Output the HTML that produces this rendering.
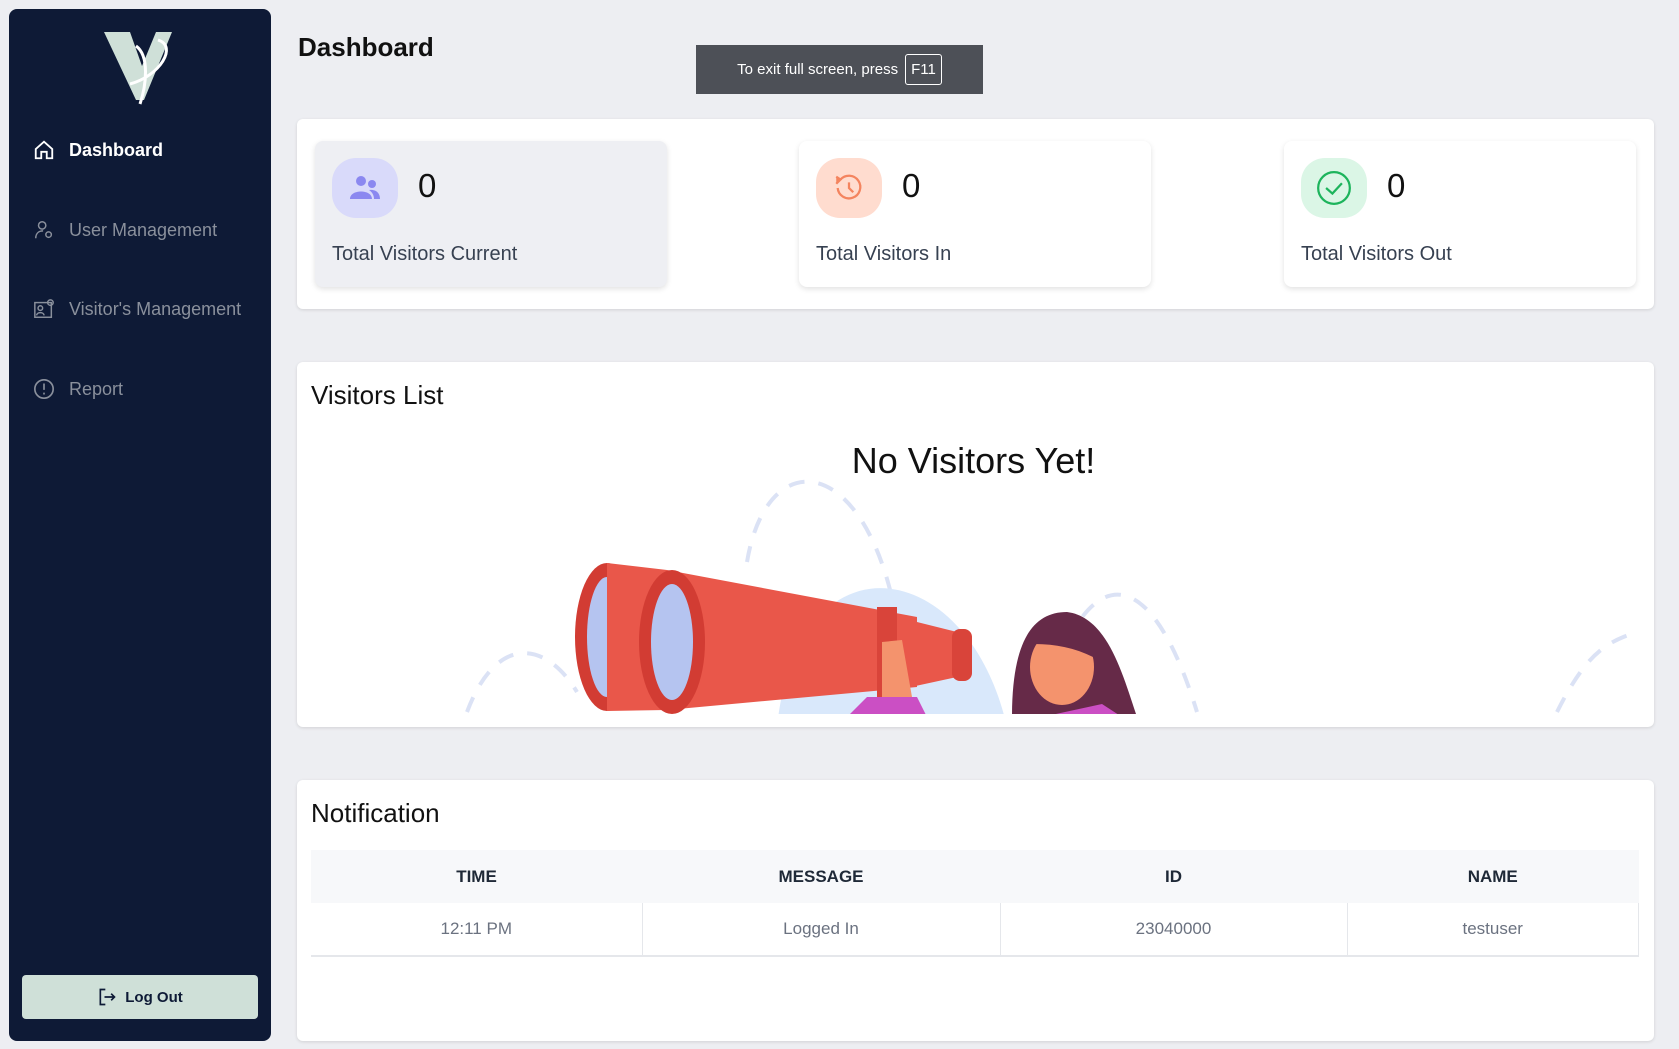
<!DOCTYPE html>
<html><head><meta charset="utf-8"><style>
*{box-sizing:border-box;margin:0;padding:0}
body{width:1679px;height:1049px;background:#edeef2;font-family:"Liberation Sans",sans-serif;position:relative;overflow:hidden;color:#111}
.a{position:absolute}
.side{left:9px;top:9px;width:262px;height:1032px;background:#0e1a36;border-radius:8px}
.nav{left:33px;font-size:18px;color:#8a909c;display:flex;align-items:center;gap:14px}
.nav svg{width:22px;height:22px}
.card{background:#fff;border-radius:6px;box-shadow:0 1px 3px rgba(0,0,0,.12)}
.st{width:352px;height:146px;border-radius:8px;background:#fff;box-shadow:0 2px 6px rgba(0,0,0,.12);top:141px}
.ib{position:absolute;left:17px;top:17px;width:66px;height:60px;border-radius:24px;display:flex;align-items:center;justify-content:center}
.num{position:absolute;left:103px;top:26px;font-size:33px;color:#111}
.lbl{position:absolute;left:17px;top:102px;font-size:20px;color:#374151}
th,td{text-align:center;height:53px}
th{background:#f7f8fa;font-size:17px;color:#1f2937;font-weight:bold}
td{font-size:17px;color:#6b7280;border-right:1px solid #e5e7eb;border-bottom:2px solid #e5e7eb}
</style></head><body>
<div class="a side"></div>
<svg class="a" style="left:100px;top:26px" width="80" height="80" viewBox="0 0 80 80">
<path d="M4 6 L30 6 L42 40 L56 6 L72 6 L44 74 L36 74 Z" fill="#cfe0d8"/>
<path d="M58 14 C78 20 60 50 30 58 M36 20 C50 30 46 60 40 78" stroke="#fff" stroke-width="3" fill="none"/>
</svg>
<div class="a nav" style="top:139px;color:#fff;font-weight:bold"><svg viewBox="0 0 24 24" fill="none" stroke="#fff" stroke-width="2"><path d="M3 11 L12 3 L21 11 V21 H15 V14 H9 V21 H3 Z"/></svg>Dashboard</div>
<div class="a nav" style="top:219px"><svg viewBox="0 0 24 24" fill="none" stroke="#8a909c" stroke-width="1.6"><circle cx="10" cy="7" r="4"/><path d="M3 21 C3 15 7 13 11 13"/><circle cx="17" cy="17" r="3"/></svg>User Management</div>
<div class="a nav" style="top:298px"><svg viewBox="0 0 24 24" fill="none" stroke="#8a909c" stroke-width="1.6"><rect x="2" y="5" width="18" height="16"/><circle cx="8" cy="11" r="2.5"/><path d="M4 19 C4 15 12 15 12 19"/><circle cx="19" cy="5" r="3"/></svg>Visitor's Management</div>
<div class="a nav" style="top:378px"><svg viewBox="0 0 24 24" fill="none" stroke="#8a909c" stroke-width="1.8"><circle cx="12" cy="12" r="10"/><path d="M12 6 V13 M12 16 V18"/></svg>Report</div>
<div class="a" style="left:22px;top:975px;width:236px;height:44px;background:#cfe0d8;border-radius:4px;display:flex;align-items:center;justify-content:center;gap:8px;font-size:15px;font-weight:bold;color:#0e1a36"><svg width="20" height="20" viewBox="0 0 24 24" fill="none" stroke="#0e1a36" stroke-width="2"><path d="M10 3 H4 V21 H10 M9 12 H21 M17 8 L21 12 L17 16"/></svg>Log Out</div>

<div class="a" style="left:298px;top:32px;font-size:26px;font-weight:bold">Dashboard</div>
<div class="a" style="left:696px;top:45px;width:287px;height:49px;background:#4d5057;color:#fff;font-size:15px;display:flex;align-items:center;justify-content:center;gap:7px">To exit full screen, press <span style="border:1px solid #fff;border-radius:3px;padding:6px 5px">F11</span></div>

<div class="a card" style="left:297px;top:119px;width:1357px;height:190px"></div>
<div class="a st" style="left:315px;background:#eeeff3">
<div class="ib" style="background:#d9dafa"><svg width="36" height="30" viewBox="0 0 36 30" fill="#8b88f0"><circle cx="14" cy="8" r="5"/><circle cx="25" cy="11" r="4"/><path d="M3 26 C3 16 25 16 25 26Z M22 17 C30 16 33 21 33 26 H27 C27 22 25 19 22 17Z"/></svg></div>
<div class="num">0</div><div class="lbl">Total Visitors Current</div></div>
<div class="a st" style="left:799px">
<div class="ib" style="background:#ffdccf"><svg width="34" height="34" viewBox="0 0 24 24" fill="none" stroke="#f4845f" stroke-width="1.6"><path d="M6 6 A8 8 0 1 1 4 12"/><path d="M3 4 L6 6 L3 9" fill="#f4845f"/><path d="M12 8 V12 L15 15"/></svg></div>
<div class="num">0</div><div class="lbl">Total Visitors In</div></div>
<div class="a st" style="left:1284px">
<div class="ib" style="background:#dbf6e6"><svg width="38" height="38" viewBox="0 0 24 24" fill="none" stroke="#1db45c" stroke-width="1.4"><circle cx="12" cy="12" r="10"/><path d="M7 12 L11 15.5 L17 9"/></svg></div>
<div class="num">0</div><div class="lbl">Total Visitors Out</div></div>

<div class="a card" style="left:297px;top:362px;width:1357px;height:365px;overflow:hidden">
<div class="a" style="left:14px;top:18px;font-size:26px">Visitors List</div>
<div class="a" style="left:0;width:100%;top:78px;text-align:center;font-size:36px;margin-left:-2px">No Visitors Yet!</div>
<svg class="a" style="left:160px;top:110px" width="1200" height="242" viewBox="0 0 1200 242">
<g fill="none" stroke="#dbe2f5" stroke-width="4" stroke-dasharray="16 14">
<path d="M10 240 C40 160 90 170 120 220"/>
<path d="M290 90 C310 -30 410 -20 440 150"/>
<path d="M610 170 C650 90 700 110 740 240"/>
<path d="M1100 240 C1130 180 1150 170 1180 160"/>
</g>
<path d="M320 255 C340 60 510 80 550 255Z" fill="#d9e8fb"/>
<ellipse cx="150" cy="165" rx="32" ry="74" fill="#d23c33"/>
<ellipse cx="150" cy="165" rx="20" ry="60" fill="#b5c4f0"/>
<path d="M150 91 L210 98 L210 238 L150 239Z" fill="#e9574a"/>
<path d="M210 98 L460 145 L460 215 L210 238Z" fill="#e9574a"/>
<ellipse cx="215" cy="170" rx="33" ry="72" fill="#d23c33"/>
<ellipse cx="215" cy="170" rx="21" ry="58" fill="#b5c4f0"/>
<rect x="420" y="135" width="20" height="90" fill="#d9443a"/>
<path d="M440 145 L500 160 L500 205 L440 218Z" fill="#e9574a"/>
<rect x="495" y="157" width="20" height="52" rx="8" fill="#d9443a"/>
<path d="M390 245 L410 225 L460 225 L470 245Z" fill="#cb4fc4"/>
<path d="M425 225 L425 170 L445 168 L455 225Z" fill="#f4936d"/>
<path d="M555 245 C555 170 575 140 610 140 C650 145 665 200 680 245Z" fill="#662a48"/>
<ellipse cx="605" cy="195" rx="32" ry="38" fill="#f4936d"/>
<path d="M578 172 C588 148 618 148 636 158 L636 185 C618 176 598 172 578 172Z" fill="#662a48"/>
<path d="M585 245 L645 232 L665 245Z" fill="#cb4fc4"/>
</svg>
</div>

<div class="a card" style="left:297px;top:780px;width:1357px;height:261px">
<div class="a" style="left:14px;top:18px;font-size:26px">Notification</div>
<table class="a" style="left:14px;top:70px;width:1328px;border-collapse:collapse">
<tr><th style="width:331px">TIME</th><th style="width:358px">MESSAGE</th><th style="width:347px">ID</th><th>NAME</th></tr>
<tr><td>12:11 PM</td><td>Logged In</td><td>23040000</td><td>testuser</td></tr>
</table>
</div>
</body></html>
